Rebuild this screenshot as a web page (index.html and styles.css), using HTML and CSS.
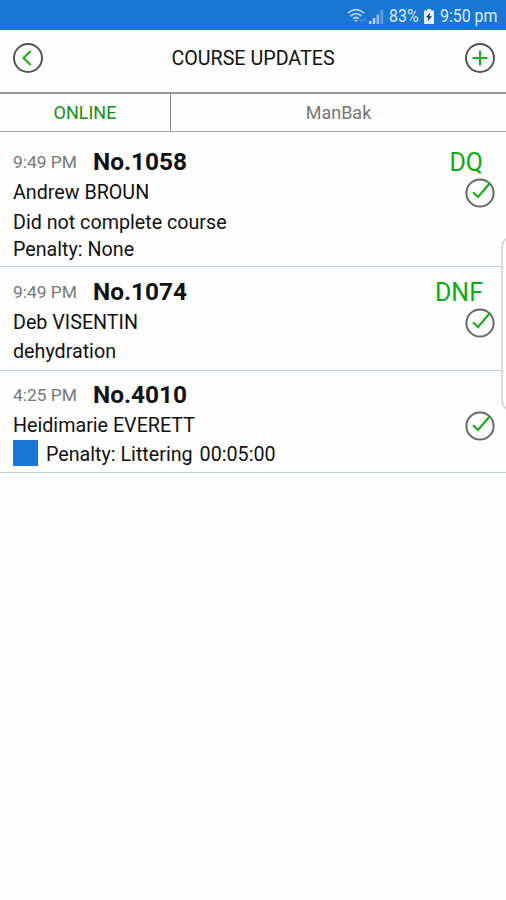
FILE: index.html
```html
<!DOCTYPE html>
<html lang="en">
<head>
    <meta charset="UTF-8">
    <meta name="viewport" content="width=device-width, initial-scale=1.0">
    <title>Course Updates</title>
    <link rel="stylesheet" href="styles.css">
</head>
<body>
    <svg width="0" height="0" class="symbols">
        <symbol id="check" viewBox="0 0 32 32">
            <circle cx="16" cy="16" r="13.6" fill="none" stroke="#666" stroke-width="2"/>
            <path d="M9 15.2l5 4.8L26 6" fill="none" stroke="#19ad19" stroke-width="2.2"/>
        </symbol>
    </svg>

    <div class="status-bar">
        <svg class="wifi" width="20" height="16" viewBox="0 0 20 16" fill="none" stroke="#b5d4f4" stroke-width="1.7">
            <path d="M1 5.2Q9 -2 17 5.2M3.6 8Q9 3.2 14.4 8M6.2 10.8Q9 8.2 11.8 10.8"/>
            <path d="M7.2 12h3.6L9 14z" fill="#b5d4f4" stroke="none"/>
            <path d="M13 12l1.2 1.6 1.2-1.6M16.5 12.6l1.2-1.6 1.2 1.6" stroke="#6fa8e6" stroke-width="1"/>
        </svg>
        <svg class="signal" width="15" height="15" viewBox="0 0 15 15">
            <path d="M0 12h2.5v3H0zM3.7 9h2.6v6H3.7z" fill="#b5d4f4"/>
            <path d="M7.5 5.5h2.7V15H7.5z" fill="#8fbdee"/>
            <path d="M11.5 1h2.7v14h-2.7z" fill="#5c9ee3"/>
        </svg>
        <span class="battery-level">83%</span>
        <svg class="battery" width="10" height="15" viewBox="0 0 10 15">
            <path d="M3 0h4v1.5h3V15H0V1.5h3z" fill="#e4effb"/>
            <path d="M6 3.2L2 8.6h2.4L3.8 12.6 8 7.2H5.4z" fill="#173f70"/>
        </svg>
        <span class="clock">9:50 pm</span>
    </div>

    <div class="header">
        <svg width="32" height="32" viewBox="0 0 32 32" fill="none">
            <circle cx="16" cy="16" r="14" stroke="#555" stroke-width="2"/>
            <path d="M18.7 9L11.5 16l7.2 7" stroke="#19ad19" stroke-width="2.1"/>
        </svg>
        <h1>COURSE UPDATES</h1>
        <svg width="32" height="32" viewBox="0 0 32 32" fill="none">
            <circle cx="16" cy="16" r="14" stroke="#555" stroke-width="2"/>
            <path d="M16 8.5v15M8.5 16h15" stroke="#19ad19" stroke-width="2.1"/>
        </svg>
    </div>

    <div class="tabs">
        <div class="tab active">ONLINE</div>
        <div class="tab">ManBak</div>
    </div>

    <div class="updates">
        <div class="update first">
            <div class="info">
                <div class="top"><span class="time">9:49 PM</span><span class="number">No.1058</span></div>
                <div class="name">Andrew BROUN</div>
                <div class="detail">Did not complete course</div>
                <div class="penalty">Penalty: None</div>
            </div>
            <div class="result">
                <div class="code">DQ</div>
                <svg class="tick"><use href="#check"/></svg>
            </div>
        </div>
        <div class="update">
            <div class="info">
                <div class="top"><span class="time">9:49 PM</span><span class="number">No.1074</span></div>
                <div class="name">Deb VISENTIN</div>
                <div class="detail">dehydration</div>
            </div>
            <div class="result">
                <div class="code">DNF</div>
                <svg class="tick"><use href="#check"/></svg>
            </div>
        </div>
        <div class="update last">
            <div class="info">
                <div class="top"><span class="time">4:25 PM</span><span class="number">No.4010</span></div>
                <div class="name">Heidimarie EVERETT</div>
                <div class="detail"><span class="card"></span><span>Penalty: Littering</span><span class="added">00:05:00</span></div>
            </div>
            <div class="result">
                <div class="code"></div>
                <svg class="tick"><use href="#check"/></svg>
            </div>
        </div>
    </div>

    <!-- edge panel handle, floats over the list -->
    <svg class="edge-handle" width="6" height="176" viewBox="0 0 6 176">
        <path d="M7 1Q2 4 2 12V164Q2 168 7 173" fill="#fefefe" stroke="#d2d2d2" stroke-width="1.6"/>
    </svg>
</body>
</html>
```
FILE: styles.css
```css
* {
    box-sizing: border-box;
}

body {
    margin: 0;
    min-height: 100vh;
    position: relative;
    overflow: hidden;
    background-color: #fefefe;
    color: #111;
    font-family: Roboto, sans-serif;
    font-size: 19.7px;
}

.symbols {
    display: block;
}

.status-bar {
    height: 30px;
    padding: 2px 9px 0 0;
    display: flex;
    align-items: center;
    justify-content: flex-end;
    background-color: #1976d2;
    color: #d9e9fa;
    font-size: 18.5px;
}

/* condensed status text */
.battery-level,
.clock {
    white-space: nowrap;
    transform: scaleX(0.86);
    transform-origin: left;
}

.battery-level {
    width: 30px;
}

.clock {
    width: 57px;
}

.signal {
    margin: 0 5px 0 2px;
}

.battery {
    margin: 0 6px 0 5px;
}

.header {
    height: 62px;
    padding: 0 10px 6px 12px;
    display: flex;
    align-items: center;
    justify-content: space-between;
}

h1 {
    margin: 0;
    padding-right: 2px;
    font-size: 19.7px;
    font-weight: 400;
}

.tabs {
    height: 40px;
    display: flex;
    border-top: 2px solid #999;
    border-bottom: 1px solid #aaa;
}

.tab {
    flex: 1;
    display: flex;
    align-items: center;
    justify-content: center;
    color: #777;
    font-size: 18px;
}

.tab.active {
    flex: 0 0 171px;
    border-right: 1px solid #888;
    color: #159015;
}

.updates {
    padding-top: 5px;
}

.update {
    display: flex;
    justify-content: space-between;
    padding: 10px 10px 4px 13px;
    border-bottom: 1px solid #b5d3d8;
}

.update.first {
    padding-bottom: 3px;
}

.update.last {
    padding-top: 9px;
    padding-bottom: 3px;
}

.top {
    height: 30px;
    display: flex;
    align-items: center;
}

.time {
    width: 80px;
    color: #777;
    font-size: 17.4px;
}

.number {
    margin-bottom: 2px;
    font-size: 24.4px;
    font-weight: 700;
}

.name {
    padding-top: 2px;
    line-height: 28px;
}

.detail {
    height: 29px;
    display: flex;
    align-items: center;
}

.first .detail {
    height: 31px;
}

.penalty {
    height: 25px;
    line-height: 23px;
}

.card {
    width: 25px;
    height: 26px;
    margin: 0 8px 3px 0;
    background-color: #1976d2;
}

.added {
    margin-left: 7px;
}

.result {
    display: flex;
    flex-direction: column;
    align-items: flex-end;
}

.code {
    height: 30px;
    padding-right: 13px;
    line-height: 31px;
    color: #12a812;
    font-size: 25px;
}

.tick {
    width: 32px;
    height: 32px;
}

.edge-handle {
    position: absolute;
    top: 237px;
    right: 0;
}
```
